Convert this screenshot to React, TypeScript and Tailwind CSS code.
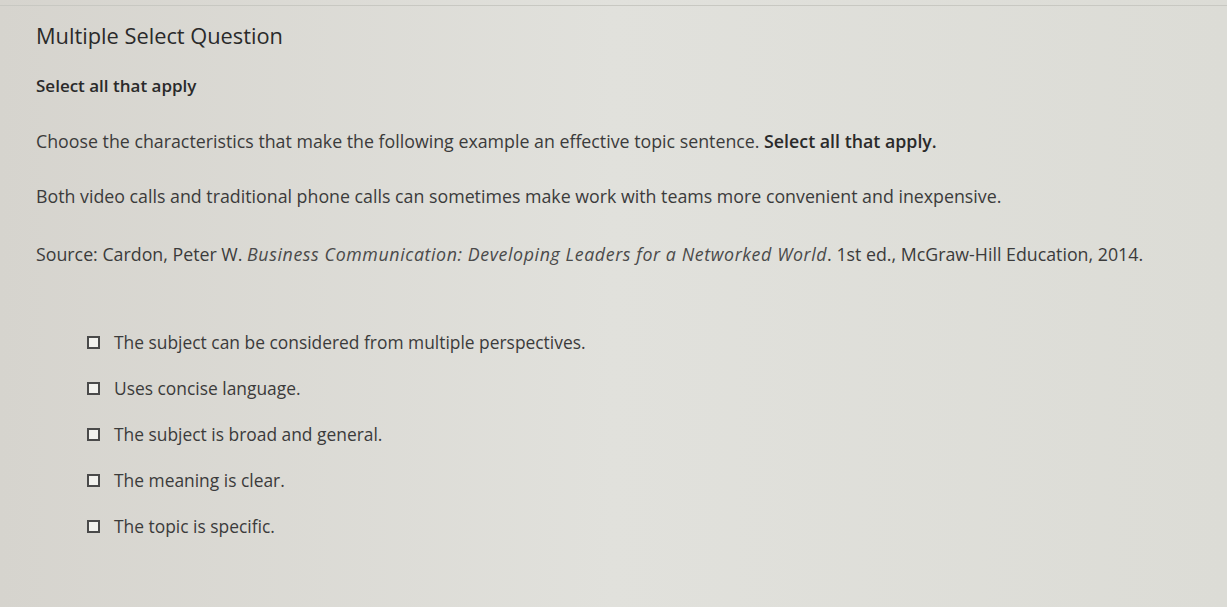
const options = [
  "The subject can be considered from multiple perspectives.",
  "Uses concise language.",
  "The subject is broad and general.",
  "The meaning is clear.",
  "The topic is specific.",
];

export default function App() {
  return (
    <div
      className="w-[1227px] h-[607px] overflow-hidden bg-gradient-to-r from-[#d6d4ce] via-[#e1e1dc] to-[#dcdcd6] text-[#3b3b3b]"
      style={{ fontFamily: "'Open Sans', Lato, sans-serif" }}
    >
      <div className="border-t border-[#c8c8c2] mt-[5px] px-[36px] pt-[16px]">
        <h1 className="text-[21.8px] leading-[28px] font-medium text-[#2a2a2a]">Multiple Select Question</h1>
        <p className="mt-[25px] text-[17px] leading-[22px] font-semibold text-[#2a2a2a]">Select all that apply</p>
        <p className="mt-[32px] text-[17.8px] leading-[24px]">
          Choose the characteristics that make the following example an effective topic sentence.{" "}
          <span className="font-semibold text-[#2a2a2a]">Select all that apply.</span>
        </p>
        <p className="mt-[31px] text-[17.8px] leading-[24px]">
          Both video calls and traditional phone calls can sometimes make work with teams more convenient and inexpensive.
        </p>
        <p className="mt-[34px] text-[17.8px] leading-[24px]">
          Source: Cardon, Peter W.{" "}
          <i className="tracking-[0.6px] text-[#4a4a4a]">Business Communication: Developing Leaders for a Networked World</i>. 1st ed.,
          McGraw-Hill Education, 2014.
        </p>
        <ul className="mt-[64px] ml-[51px] flex flex-col gap-[22px]">
          {options.map((o) => (
            <li key={o} className="flex items-center gap-[14px] text-[17.4px] leading-[24px]">
              <span className="w-[13px] h-[13px] border-2 border-[#4a4a4a] bg-[#f2f2ee] shrink-0" />
              <span>{o}</span>
            </li>
          ))}
        </ul>
      </div>
    </div>
  );
}
